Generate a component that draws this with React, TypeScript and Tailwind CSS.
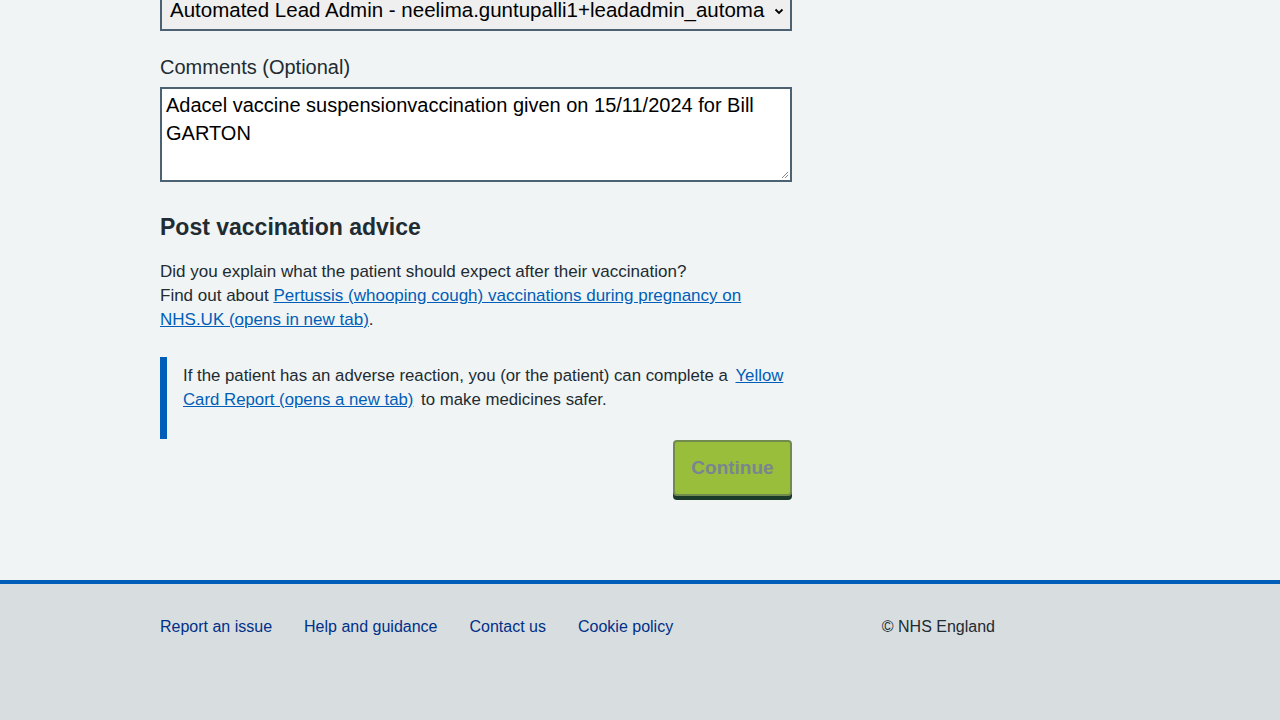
export default function App() {
  return (
    <div className="min-h-[720px] bg-[#f0f4f5] font-['Liberation_Sans',Arial,sans-serif] text-[#212b32] flex flex-col">
      <main className="flex-1 pl-[160px]">
        <div className="w-[632px] -mt-[10px]">
          <div className="relative h-[41px] border-2 border-[#4c6272] bg-[#efefef] flex items-center pl-[8px] pr-[6px]">
            <span className="text-[20.5px] text-black whitespace-nowrap overflow-hidden flex-1">
              Automated Lead Admin - neelima.guntupalli1+leadadmin_automa
            </span>
            <svg width="10" height="8" viewBox="0 0 10 8" className="ml-1">
              <path d="M1.5 2.5 L5 6 L8.5 2.5" fill="none" stroke="#000" strokeWidth="1.8" />
            </svg>
          </div>

          <label className="block mt-[22px] text-[20px] leading-[28px]">Comments (Optional)</label>
          <div className="mt-[6px] h-[95px] border-2 border-[#4c6272] bg-white px-[4px] pt-[2px] relative">
            <p className="text-[20px] leading-[28px] text-black">
              Adacel vaccine suspensionvaccination given on 15/11/2024 for Bill GARTON
            </p>
            <svg width="8" height="8" viewBox="0 0 8 8" className="absolute right-[1px] bottom-[1px]">
              <path d="M7 1 L1 7 M7 4 L4 7" stroke="#888" strokeWidth="1" />
            </svg>
          </div>

          <h2 className="mt-[29px] text-[23px] leading-[32px] font-bold">Post vaccination advice</h2>
          <p className="mt-[17px] text-[17px] leading-[24px]">
            Did you explain what the patient should expect after their vaccination?
            <br />
            Find out about{" "}
            <a href="#" className="text-[#005eb8] underline">
              Pertussis (whooping cough) vaccinations during pregnancy on NHS.UK (opens in new tab)
            </a>
            .
          </p>

          <div className="mt-[25px] border-l-[7px] border-[#005eb8] h-[82px] pl-[16px] pt-[7px]">
            <p className="text-[16.8px] leading-[24px]">
              If the patient has an adverse reaction, you (or the patient) can complete a{" "}
              <a href="#" className="text-[#005eb8] underline mx-[3px]">
                Yellow Card Report (opens a new tab)
              </a>{" "}
              to make medicines safer.
            </p>
          </div>

          <div className="flex justify-end mt-[1px]">
            <button className="w-[119px] h-[56px] rounded-[4px] border-2 border-[#718a4f] bg-[#98be3b] text-[#7a8591] text-[19px] font-bold shadow-[0_4px_0_#1c3a2a]">
              Continue
            </button>
          </div>
        </div>
      </main>

      <footer className="h-[140px] border-t-4 border-[#005eb8] bg-[#d8dde0] pl-[160px] pt-[31px]">
        <div className="flex items-center w-[835px] text-[16px] leading-[24px]">
          <div className="flex gap-[32px] flex-1">
            <a href="#" className="text-[#003087]">Report an issue</a>
            <a href="#" className="text-[#003087]">Help and guidance</a>
            <a href="#" className="text-[#003087]">Contact us</a>
            <a href="#" className="text-[#003087]">Cookie policy</a>
          </div>
          <span className="text-[#212b32]">© NHS England</span>
        </div>
      </footer>
    </div>
  );
}
